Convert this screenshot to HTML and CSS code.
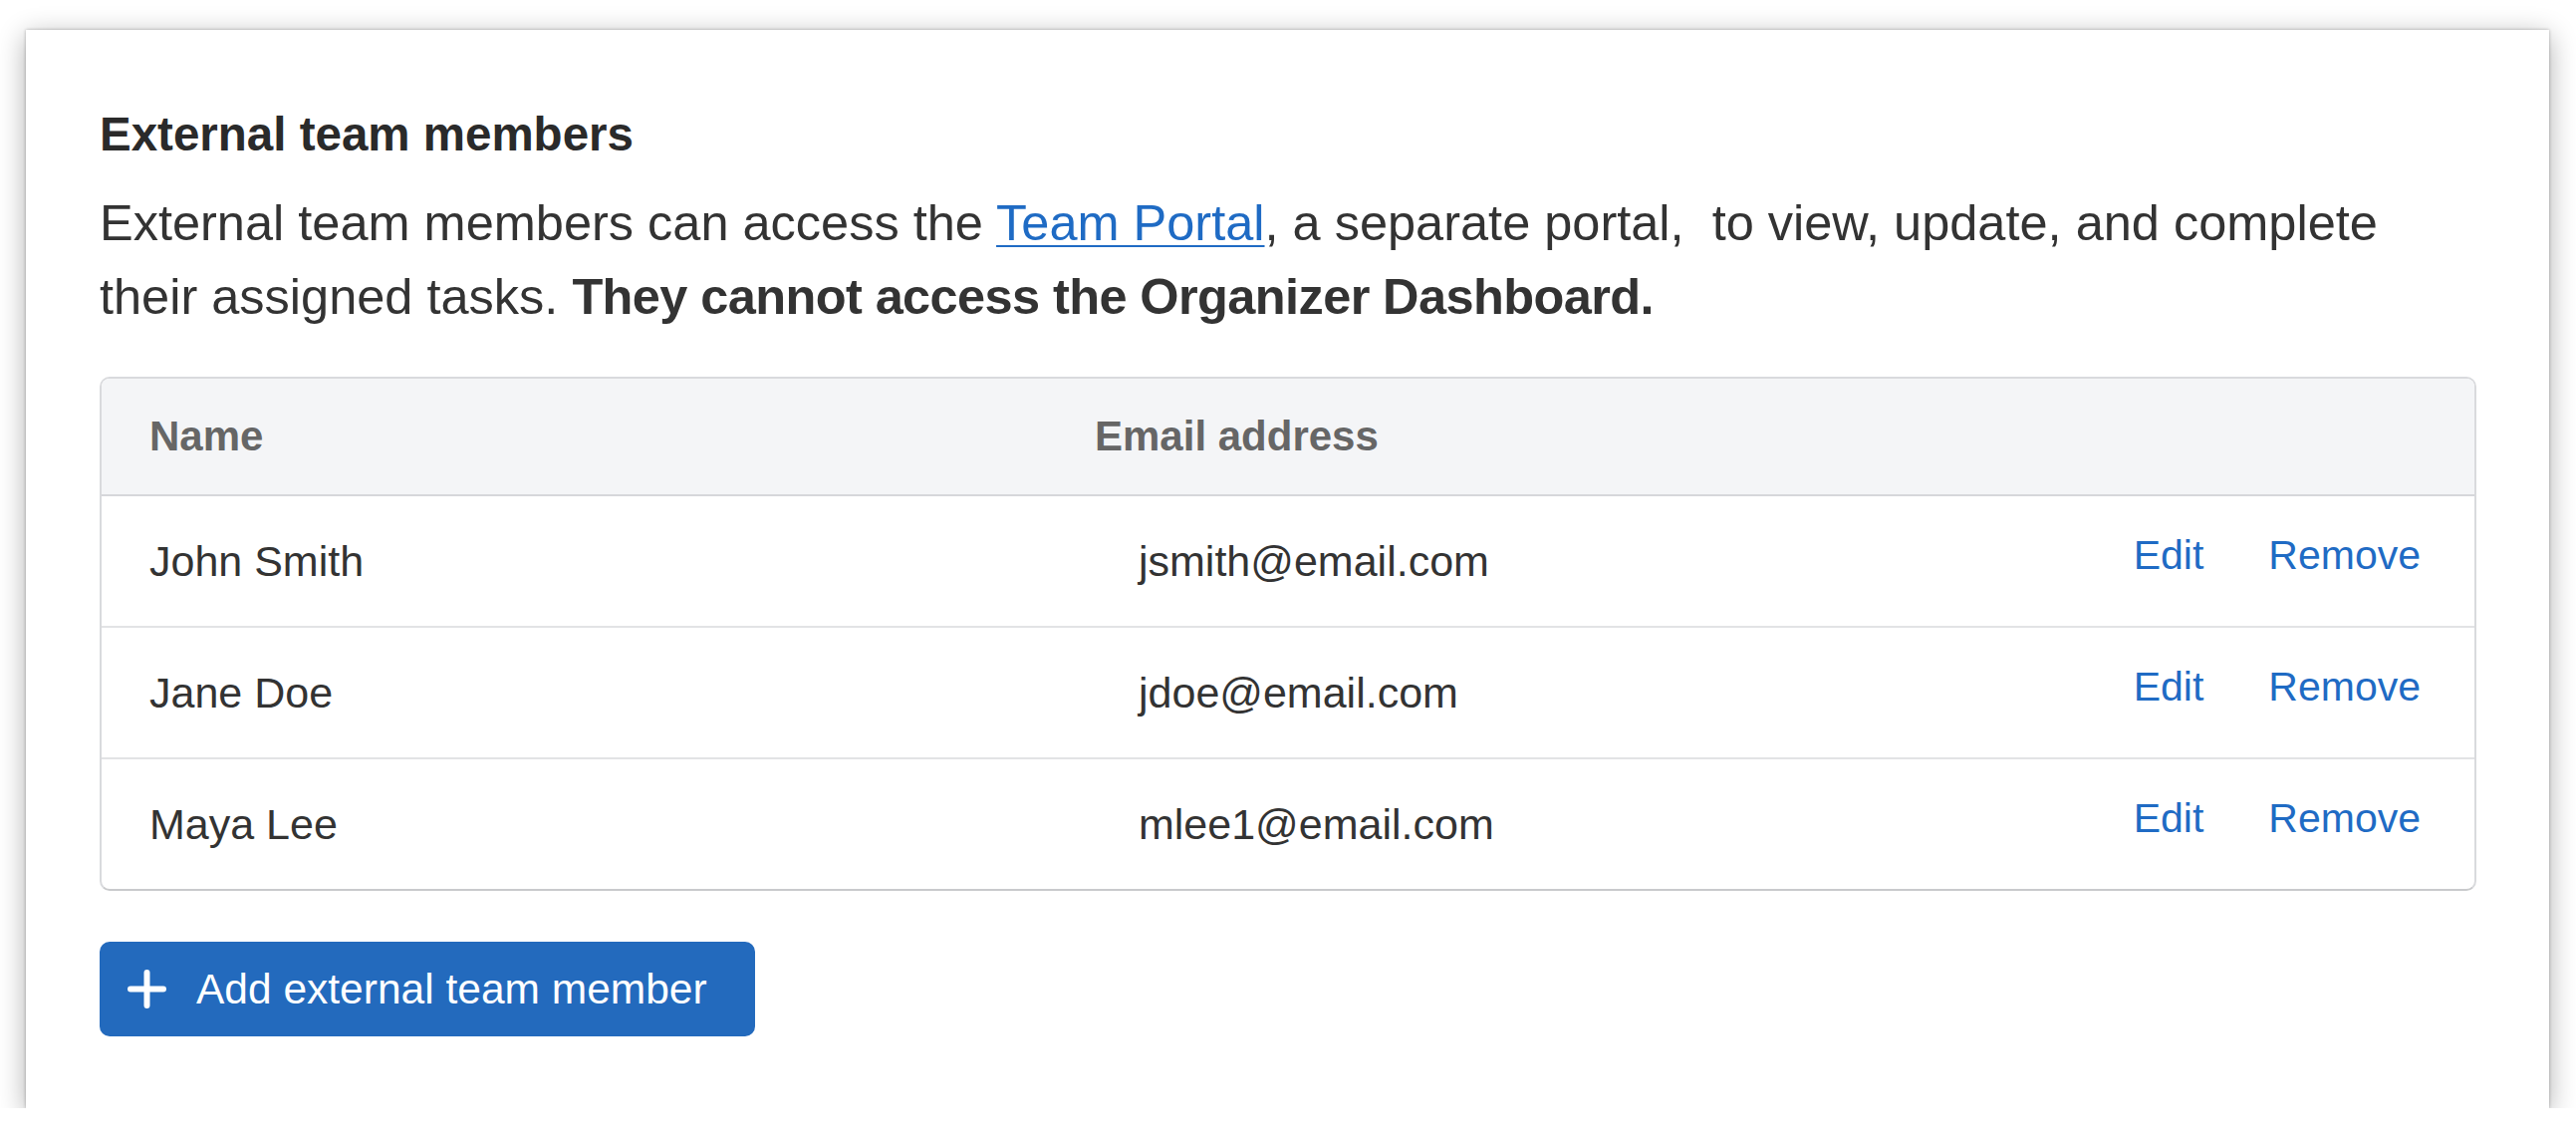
FILE: index.html
```
<!DOCTYPE html>
<html>
<head>
  <meta charset="utf-8">
  <title>External team members</title>
  <link rel="stylesheet" href="styles.css">
</head>
<body class="body">
<div class="card">
  <h2 class="header">External team members</h2>
  <p class="intro">External team members can access the <a href="#" class="portal">Team Portal</a>, a separate portal,&nbsp; to view, update, and complete
their assigned tasks. <b>They cannot access the Organizer Dashboard.</b></p>

  <div class="tablebox">
    <table class="members">
      <colgroup>
        <col class="colname">
        <col class="colemail">
        <col>
      </colgroup>
      <thead>
        <tr>
          <th class="tableheader">Name</th>
          <th class="tableheader">Email address</th>
          <th class="tableheader"></th>
        </tr>
      </thead>
      <tbody>
        <tr>
          <td class="tabledata">John Smith</td>
          <td class="tabledata email">jsmith@email.com</td>
          <td class="tabledata actions"><a href="#">Edit</a><a href="#">Remove</a></td>
        </tr>
        <tr>
          <td class="tabledata">Jane Doe</td>
          <td class="tabledata email">jdoe@email.com</td>
          <td class="tabledata actions"><a href="#">Edit</a><a href="#">Remove</a></td>
        </tr>
        <tr>
          <td class="tabledata">Maya Lee</td>
          <td class="tabledata email">mlee1@email.com</td>
          <td class="tabledata actions"><a href="#">Edit</a><a href="#">Remove</a></td>
        </tr>
      </tbody>
    </table>
  </div>

  <button class="addbutton" type="button">
    <svg class="plus" width="39" height="39" viewBox="0 0 39 39"><path d="M19.5 3 V36 M3 19.5 H36" stroke="#fff" stroke-width="6" stroke-linecap="round" fill="none"/></svg>
    <span>Add external team member</span>
  </button>
</div>
</body>
</html>
```

FILE: styles.css
```
.body { margin:0; background:#FFFFFF; font-family:"Liberation Sans",Arial,Helvetica,sans-serif; color:#333333; }
.card { margin:30px 27px 0 26px; padding:77px 73px 72px 74px; background:#FFFFFF; box-shadow:0 0 3px rgba(0,0,0,0.28), 0 6px 26px rgba(0,0,0,0.32); }
.header { margin:0; font-size:47.5px; line-height:56px; font-weight:bold; color:#2a2a2a; }
.intro { margin:24px 0 0 0; font-size:50.5px; line-height:74px; }
.intro b { font-weight:bold; letter-spacing:-0.6px; }
.portal { color:#1f6bc4; text-decoration:underline; text-decoration-thickness:2px; text-underline-offset:5px; }

.tablebox { margin-top:43px; border:2px solid #d9dadd; border-bottom-color:#c9cacc; border-radius:10px; overflow:hidden; }
.members { width:100%; border-collapse:collapse; table-layout:fixed; }
.colname { width:949px; }
.colemail { width:951px; }
.tableheader { height:116px; padding:0 0 0 48px; text-align:left; font-size:42px; font-weight:bold; color:#666666; background-color:#f4f5f7; border-bottom:2px solid #d6d7da; }
.tabledata { height:130px; padding:0 0 0 48px; font-size:43px; color:#333333; border-bottom:2px solid #e2e3e5; }
tbody tr:last-child .tabledata { border-bottom:none; }
.email { padding-left:92px; }
.actions { height:118px; padding:0 54px 12px 0; text-align:right; font-size:41px; white-space:nowrap; }
.actions a { color:#1f6bc4; text-decoration:none; }
.actions a + a { margin-left:65px; }

.addbutton { display:flex; align-items:center; margin-top:51px; height:95px; padding:0 48px 0 28px; border:none; border-radius:10px; background:#236abd; color:#FFFFFF; font-family:inherit; font-size:42.5px; }
.plus { margin-right:30px; }
```
